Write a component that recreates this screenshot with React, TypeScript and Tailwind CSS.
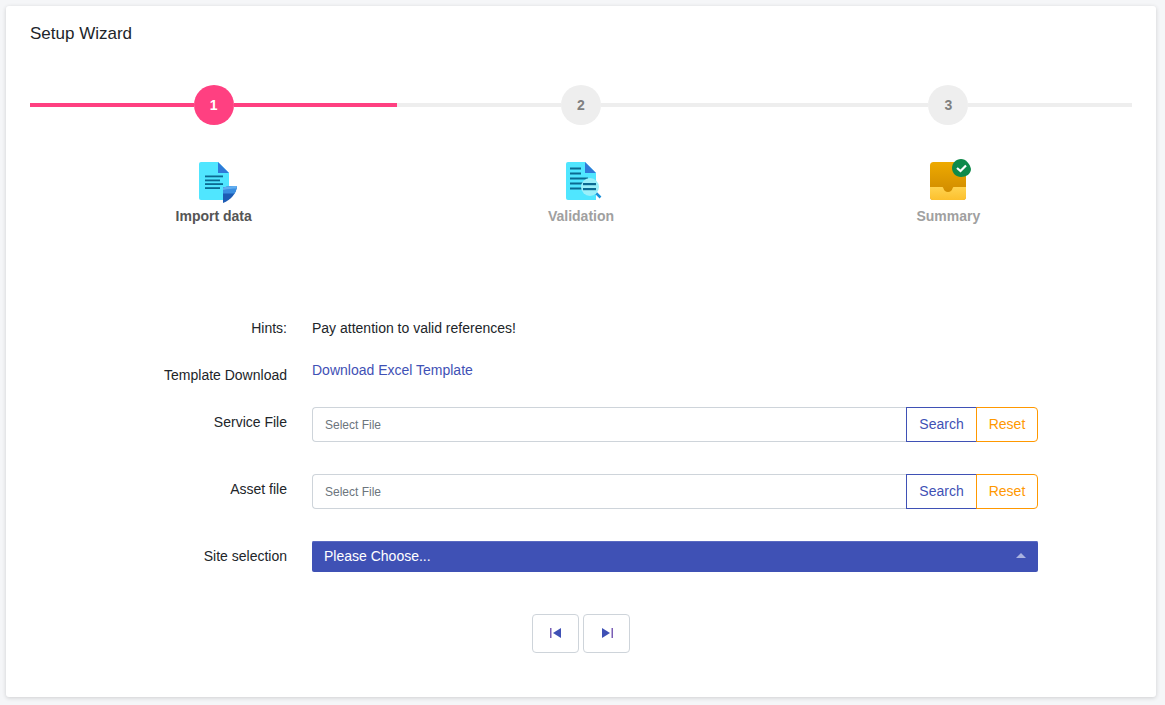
function ImportIcon() {
  return (
    <svg width="44" height="44" viewBox="0 0 44 44" className="block overflow-visible">
      <path d="M9 2h17l11 11v27H9a2 2 0 0 1-2-2V4a2 2 0 0 1 2-2z" fill="#50e6ff" />
      <path d="M26 2l11 11H26z" fill="#2f7ad8" />
      <rect x="13" y="15.500" width="18" height="1.800" fill="#0b6a92" />
      <rect x="13" y="19.500" width="15" height="1.800" fill="#0b6a92" />
      <rect x="13" y="23.200" width="18" height="1.800" fill="#0b6a92" />
      <rect x="13" y="27.200" width="15" height="1.800" fill="#0b6a92" />
      <path d="M31 27.500c5-1.500 10-1.500 14-1.500-.4 7-6 14-14 17z" fill="#1d5cb4" />
      <path d="M31 27.500c5-1.500 10-1.500 14-1.500-.2 2.500-1 5-2.400 7.500H31z" fill="#3a8ee0" />
      <path d="M31 27.500c5-1.500 10-1.500 14-1.500l-.6 2.500c-4 0-9 .5-13.400 1.500z" fill="#62aef0" />
    </svg>
  );
}

function ValidationIcon() {
  return (
    <svg width="44" height="44" viewBox="0 0 44 44" className="block overflow-visible">
      <path d="M9 2h17l11 11v27H9a2 2 0 0 1-2-2V4a2 2 0 0 1 2-2z" fill="#50e6ff" />
      <path d="M26 2l11 11H26z" fill="#2f7ad8" />
      <rect x="11" y="7.500" width="11" height="2" fill="#0b6a92" />
      <rect x="11" y="12.500" width="11" height="2" fill="#0b6a92" />
      <rect x="11" y="17.500" width="18" height="2" fill="#0b6a92" />
      <rect x="11" y="22.500" width="14" height="2" fill="#0b6a92" />
      <rect x="11" y="27.500" width="14" height="2" fill="#0b6a92" />
      <path d="M37 33l4.500 4.500" stroke="#1a8fd8" strokeWidth="2.500" />
      <circle cx="31" cy="27" r="9" fill="#9af0fa" />
      <rect x="24" y="23" width="13" height="2.200" fill="#0b6a92" />
      <rect x="24" y="28" width="13" height="2.200" fill="#0b6a92" />
    </svg>
  );
}

function SummaryIcon() {
  return (
    <svg width="44" height="44" viewBox="0 0 44 44" className="block overflow-visible">
      <defs>
        <linearGradient id="tray" x1="0" y1="0" x2="0" y2="1">
          <stop offset="0" stopColor="#eeaa00" />
          <stop offset="1" stopColor="#c98400" />
        </linearGradient>
        <linearGradient id="lip" x1="0" y1="0" x2="0" y2="1">
          <stop offset="0" stopColor="#ffd34f" />
          <stop offset="1" stopColor="#fcc02e" />
        </linearGradient>
      </defs>
      <rect x="4" y="2" width="36" height="38" rx="3.500" fill="url(#tray)" />
      <path d="M4 27h12c1 0 1 .5 1.500 1.500.6 2 2 3.500 4.500 3.500s3.900-1.500 4.500-3.500c.5-1 .5-1.500 1.500-1.500h12v10a3 3 0 0 1-3 3H7a3 3 0 0 1-3-3z" fill="url(#lip)" />
      <path d="M35 -1C40 -1 44 4 45 9 45 14 40 17 35 17 30 17 26 13 26 8 26 3 30 -1 35 -1z" fill="#0f8a4a" />
      <path d="M31 8l3.500 3 5.500-5.500" stroke="#fff" strokeWidth="2.200" fill="none" />
    </svg>
  );
}

const steps = [
  { n: 1, label: "Import data", active: true, icon: <ImportIcon /> },
  { n: 2, label: "Validation", active: false, icon: <ValidationIcon /> },
  { n: 3, label: "Summary", active: false, icon: <SummaryIcon /> },
];

function Step({ n, label, active, icon }: (typeof steps)[number]) {
  return (
    <div className="flex flex-col items-center">
      <div className="flex w-full items-center">
        <div className={active ? "h-1 flex-1 bg-[#ff4081]" : "h-1 flex-1 bg-[#eeeeee]"} />
        <div
          className={
            active
              ? "flex h-10 w-10 items-center justify-center rounded-full bg-[#ff4081] text-[14px] font-bold text-white"
              : "flex h-10 w-10 items-center justify-center rounded-full bg-[#eeeeee] text-[14px] font-bold text-[#808080]"
          }
        >
          {n}
        </div>
        <div className={active ? "h-1 flex-1 bg-[#ff4081]" : "h-1 flex-1 bg-[#eeeeee]"} />
      </div>
      <div className="mt-[35px]">{icon}</div>
      <div className={active ? "mt-[2px] text-[14px] font-bold leading-5 text-[#555555]" : "mt-[2px] text-[14px] font-bold leading-5 text-[#a0a0a0]"}>
        {label}
      </div>
    </div>
  );
}

function FileRow({ label, className }: { label: string; className: string }) {
  return (
    <div className={`flex ${className}`}>
      <div className="w-[257px] pt-[5px] text-right leading-5 text-[#212529]">{label}</div>
      <div className="ml-[25px] flex h-[35px] w-[726px]">
        <div className="flex flex-1 items-center rounded-l border border-r-0 border-[#ced4da] pl-3 text-[12px] text-[#6c757d]">
          Select File
        </div>
        <button className="h-full w-[71px] border border-[#3f51b5] text-[#3f51b5]">Search</button>
        <button className="-ml-px h-full w-[62px] rounded-r border border-[#ff9800] text-[#ff9800]">Reset</button>
      </div>
    </div>
  );
}

export default function App() {
  return (
    <div className="min-h-screen bg-[#f5f6f8] pl-1.5 pr-[9px] pt-1.5 pb-2 font-['Liberation_Sans',Arial,sans-serif] text-[14px]">
      <div className="rounded-[3px] bg-white px-6 pt-[18px] pb-[44px] shadow-[0_1px_4px_rgba(0,0,0,0.16)]">
        <h1 className="text-[17px] leading-5 text-[#212529]">Setup Wizard</h1>

        <div className="mt-[41px] grid grid-cols-3">
          {steps.map((s) => (
            <Step key={s.n} {...s} />
          ))}
        </div>

        <div className="mt-[92px] flex">
          <div className="w-[257px] text-right leading-5 text-[#212529]">Hints:</div>
          <div className="ml-[25px] leading-5 text-[#212529]">Pay attention to valid references!</div>
        </div>

        <div className="mt-[22px] flex">
          <div className="w-[257px] pt-[5px] text-right leading-5 text-[#212529]">Template Download</div>
          <a className="ml-[25px] leading-5 text-[#3f51b5]">Download Excel Template</a>
        </div>

        <FileRow label="Service File" className="mt-[22px]" />
        <FileRow label="Asset file" className="mt-[32px]" />

        <div className="mt-[32px] flex">
          <div className="w-[257px] pt-[5px] text-right leading-5 text-[#212529]">Site selection</div>
          <div className="relative ml-[25px] flex h-[31px] w-[726px] items-center rounded-[2px] bg-[#3f51b5] pl-3 text-white shadow-[inset_0_1px_0_#5a6ac2]">
            Please Choose...
            <svg width="10" height="5" viewBox="0 0 10 5" className="absolute right-3 top-[12px]">
              <path d="M0 5L5 0l5 5z" fill="#a9b2e0" />
            </svg>
          </div>
        </div>

        <div className="mt-[42px] flex justify-center gap-1">
          <button className="flex h-[39px] w-[47px] items-center justify-center rounded border border-[#ced4da] pb-0.5">
            <svg width="12" height="10" viewBox="0 0 12 10">
              <rect x="0" y="0" width="1.500" height="10" fill="#7a5fb5" />
              <path d="M11 0v10L3 5z" fill="#3f51b5" />
            </svg>
          </button>
          <button className="flex h-[39px] w-[47px] items-center justify-center rounded border border-[#ced4da] pb-0.5">
            <svg width="12" height="10" viewBox="0 0 12 10">
              <path d="M1 0v10l8-5z" fill="#3f51b5" />
              <rect x="10.500" y="0" width="1.500" height="10" fill="#7a5fb5" />
            </svg>
          </button>
        </div>
      </div>
    </div>
  );
}
